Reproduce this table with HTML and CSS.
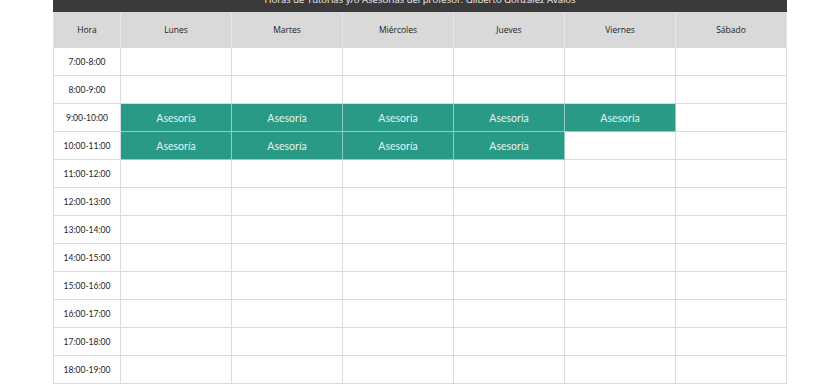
FILE: index.html
```html
<!DOCTYPE html>
<html lang="es">
<head>
<meta charset="utf-8">
<link rel="stylesheet" href="styles.css">
</head>
<body>
<div class="page">
  <div class="title">Horas de Tutorías y/o Asesorías del profesor: Gilberto González Ávalos</div>
  <table class="schedule">
    <colgroup>
      <col class="c-hora"><col><col><col><col><col><col>
    </colgroup>
    <thead>
      <tr><th>Hora</th><th>Lunes</th><th>Martes</th><th>Miércoles</th><th>Jueves</th><th>Viernes</th><th>Sábado</th></tr>
    </thead>
    <tbody>
      <tr><td class="h">7:00-8:00</td><td></td><td></td><td></td><td></td><td></td><td></td></tr>
      <tr><td class="h">8:00-9:00</td><td></td><td></td><td></td><td></td><td></td><td></td></tr>
      <tr><td class="h">9:00-10:00</td><td class="busy">Asesoría</td><td class="busy">Asesoría</td><td class="busy">Asesoría</td><td class="busy">Asesoría</td><td class="busy">Asesoría</td><td></td></tr>
      <tr><td class="h">10:00-11:00</td><td class="busy">Asesoría</td><td class="busy">Asesoría</td><td class="busy">Asesoría</td><td class="busy">Asesoría</td><td></td><td></td></tr>
      <tr><td class="h">11:00-12:00</td><td></td><td></td><td></td><td></td><td></td><td></td></tr>
      <tr><td class="h">12:00-13:00</td><td></td><td></td><td></td><td></td><td></td><td></td></tr>
      <tr><td class="h">13:00-14:00</td><td></td><td></td><td></td><td></td><td></td><td></td></tr>
      <tr><td class="h">14:00-15:00</td><td></td><td></td><td></td><td></td><td></td><td></td></tr>
      <tr><td class="h">15:00-16:00</td><td></td><td></td><td></td><td></td><td></td><td></td></tr>
      <tr><td class="h">16:00-17:00</td><td></td><td></td><td></td><td></td><td></td><td></td></tr>
      <tr><td class="h">17:00-18:00</td><td></td><td></td><td></td><td></td><td></td><td></td></tr>
      <tr><td class="h">18:00-19:00</td><td></td><td></td><td></td><td></td><td></td><td></td></tr>
    </tbody>
  </table>
</div>
</body>
</html>
```

FILE: styles.css
```css
html, body {
  margin: 0;
  padding: 0;
  background: #ffffff;
  overflow: hidden;
}
.page {
  width: 734px;
  margin: -18px 0 0 53px;
  font-family: Lato, "Open Sans", sans-serif;
}
.title {
  height: 30px;
  background: #3a3a3a;
  color: #f2f2f2;
  font-family: "Open Sans", sans-serif;
  font-size: 9.5px;
  line-height: 35px;
  text-align: center;
  white-space: nowrap;
}
.schedule {
  width: 734px;
  border-collapse: collapse;
  table-layout: fixed;
}
.c-hora { width: 67px; }
.schedule th {
  height: 35px;
  padding: 0;
  background: #d9d9d9;
  color: #222;
  font-family: "Open Sans", sans-serif;
  font-weight: 400;
  font-size: 8.5px;
  border-left: 1px solid #e6e6e6;
  border-right: 1px solid #e6e6e6;
  border-top: 0;
}
.schedule td {
  height: 27px;
  padding: 0;
  border: 1px solid #dcdcdc;
  text-align: center;
  font-size: 9px;
  color: #222;
}
.schedule td.h {
  font-size: 8.5px;
}
.schedule td.busy {
  background: #289a86;
  color: #e6f4f1;
  font-size: 10.5px;
  border-color: #8fcfc3;
}
```
